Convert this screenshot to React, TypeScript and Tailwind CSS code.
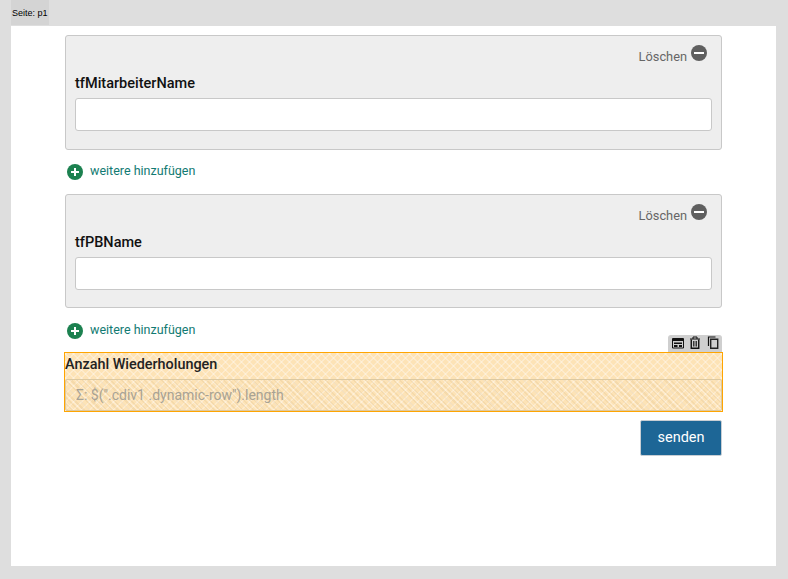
const dots =
  "bg-[#fde3b6] bg-[repeating-linear-gradient(45deg,#ffffff4d_0px,#ffffff4d_1.5px,transparent_1.5px,transparent_5.66px),repeating-linear-gradient(135deg,#ffffff4d_0px,#ffffff4d_1.5px,transparent_1.5px,transparent_5.66px)]"
const stripes =
  "bg-[repeating-linear-gradient(45deg,#b9965a1f_0px,#b9965a1f_1.5px,transparent_1.5px,transparent_4px)]"

function AddMore({ top }: { top: string }) {
  return (
    <div className={`flex h-[44px] items-start pl-[2px] ${top}`}>
      <span className="mt-[1px] flex h-4 w-4 items-center justify-center rounded-full bg-[#1c8150]">
        <svg viewBox="0 0 10 10" className="h-[10px] w-[10px]">
          <path d="M5 1v8M1 5h8" stroke="#fff" strokeWidth="2" />
        </svg>
      </span>
      <span className="ml-[7px] text-[12.5px] leading-[16px] text-[#117a72]">weitere hinzufügen</span>
    </div>
  )
}

function Group({ label, height }: { label: string; height: string }) {
  return (
    <div className={`rounded-[3px] border border-[#c8c8c8] bg-[#eeeeee] px-[9px] ${height}`}>
      <div className="flex h-[40px] items-start justify-end pr-[5px] pt-[9px]">
        <span className="mt-[4px] text-[12.8px] leading-[16px] text-[#666666]">Löschen</span>
        <span className="ml-[4px] flex h-4 w-4 items-center justify-center rounded-full bg-[#5f5f5f]">
          <span className="h-[2px] w-[10px] bg-white" />
        </span>
      </div>
      <div className="h-[22px] text-[14.5px] font-medium leading-[16px] text-[#111111]">{label}</div>
      <div className="h-[33px] rounded-[3px] border border-[#c8c8c8] bg-white" />
    </div>
  )
}

export default function App() {
  return (
    <div className="h-[579px] w-[788px] bg-[#dedede] font-['Roboto',sans-serif]">
      <div className="h-[26px] pl-[11px]">
        <div className="h-[25px] w-[38px] bg-[#d4d4d4] pt-[6px] pl-[1px] font-['Liberation_Sans',sans-serif] text-[9px] leading-[14px] text-black">
          Seite: p1
        </div>
      </div>
      <div className="mx-[11px] h-[540px] w-[765px] bg-white pl-[54px] pr-[54px] pt-[9px]">
        <div className="w-[657px]">
          <Group label="tfMitarbeiterName" height="h-[115px]" />
          <AddMore top="pt-[13px]" />
          <Group label="tfPBName" height="h-[114px]" />
          <AddMore top="pt-[14px]" />
          <div className="relative">
            <div className="absolute -top-[17px] right-0 flex h-[17px] w-[54px] items-center gap-[5px] rounded-t-[3px] bg-[#cfcfcf] pb-[2px] pl-[4px]">
              <svg viewBox="0 0 12 12" className="h-3 w-3">
                <path d="M.5 1.5h11v9.5H.5z" fill="none" stroke="#111" />
                <path d="M1 1h10v3H1zM2 5.5h8V7H2zM2 8h3.5v2H2zM7 8h3v2H7z" fill="#111" />
              </svg>
              <svg viewBox="0 0 12 13" className="h-[13px] w-[12px]">
                <path d="M1 3h10M4 3V1h4v2" fill="none" stroke="#111" />
                <path d="M2.25 3.5v8.75h7.5V3.5" fill="none" stroke="#111" strokeWidth="1.4" />
                <path d="M4.5 5v5.5M6 5v5.5M7.5 5v5.5" stroke="#111" strokeWidth=".8" />
              </svg>
              <svg viewBox="0 0 13 13" className="h-[13px] w-[13px]">
                <path d="M2.5 10V1h7" fill="none" stroke="#111" strokeWidth="1.2" />
                <path d="M4.7 3.2h7v9h-7z" fill="none" stroke="#222" strokeWidth="1.4" />
              </svg>
            </div>
            <div className={`-mx-[1px] h-[60px] border border-[#ffa500] ${dots}`}>
              <div className="h-[26px] pt-[3px] text-[14.4px] font-medium leading-[18px] text-[#222222]">
                Anzahl Wiederholungen
              </div>
              <div className={`h-[32px] rounded-[2px] border border-[#dcc9a2] pl-[10px] text-[14px] leading-[30px] text-[#a8a294] ${stripes}`}>
                Σ: $(".cdiv1 .dynamic-row").length
              </div>
            </div>
          </div>
          <div className="flex justify-end pt-[8px]">
            <div className="flex h-[36px] w-[82px] items-center justify-center rounded-[2px] border border-[#c8ced4] bg-[#1d6696] pb-[1px] text-[14.5px] text-white">
              senden
            </div>
          </div>
        </div>
      </div>
    </div>
  )
}
